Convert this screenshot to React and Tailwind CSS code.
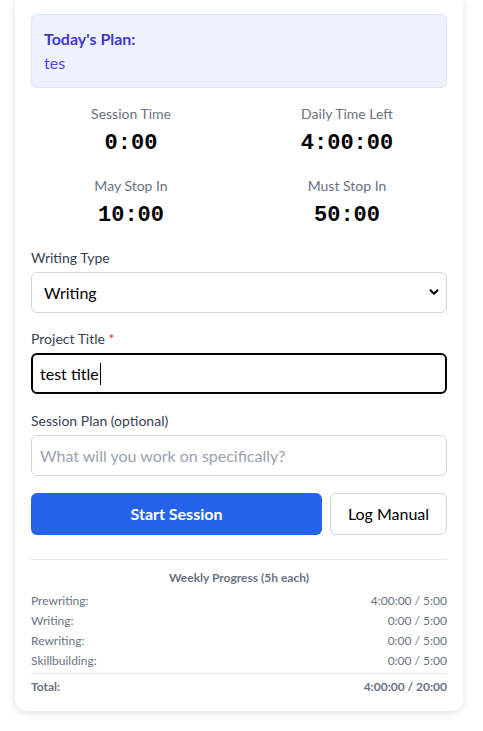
import React from 'react';
import { ChevronDown } from 'lucide-react';

const weekly = [
  ['Prewriting:', '4:00:00 / 5:00'],
  ['Writing:', '0:00 / 5:00'],
  ['Rewriting:', '0:00 / 5:00'],
  ['Skillbuilding:', '0:00 / 5:00'],
];

const Timer = ({ label, value }) => (
  <div className="flex flex-col items-center">
    <span className="text-sm leading-5 text-gray-500">{label}</span>
    <span className="mt-1 text-[22px] leading-8 font-bold text-black" style={{ fontFamily: '"Liberation Mono", "DejaVu Sans Mono", monospace' }}>{value}</span>
  </div>
);

const App = () => {
  return (
    <div className="min-h-[731px] bg-white" style={{ fontFamily: 'Lato, "Noto Sans", sans-serif' }}>
      <div className="ml-[15px] mt-[-2px] w-[448px] rounded-b-xl bg-white p-4 shadow-[0_2px_8px_rgba(0,0,0,0.12)]">
        {/* Plan */}
        <div className="rounded-md border border-[#dde3fb] bg-[#eef2ff] p-3">
          <p className="text-base leading-6 font-bold text-[#4338ca]">Today's Plan:</p>
          <p className="text-base leading-6 text-[#4f46e5]">tes</p>
        </div>

        {/* Timers */}
        <div className="mt-4 grid grid-cols-2 gap-x-4 gap-y-4">
          <Timer label="Session Time" value="0:00" />
          <Timer label="Daily Time Left" value="4:00:00" />
          <Timer label="May Stop In" value="10:00" />
          <Timer label="Must Stop In" value="50:00" />
        </div>

        {/* Form */}
        <div className="mt-4">
          <label className="mb-1 block text-sm leading-5 text-gray-700">Writing Type</label>
          <div className="relative">
            <select defaultValue="Writing" className="h-[41px] w-full appearance-none rounded-md border border-gray-300 bg-white px-3 text-base text-black outline-none">
              <option>Prewriting</option>
              <option>Writing</option>
              <option>Rewriting</option>
              <option>Skillbuilding</option>
            </select>
            <ChevronDown className="pointer-events-none absolute right-[6px] top-[13px] h-[14px] w-[14px] text-black" strokeWidth={3.5} />
          </div>
        </div>

        <div className="mt-4">
          <label className="mb-1 block text-sm leading-5 text-gray-700">
            Project Title <span className="text-red-500">*</span>
          </label>
          <div className="flex h-[41px] w-full items-center rounded-md border-2 border-black bg-white px-[7px] text-base text-black">
            <span>test title</span>
            <span className="ml-px h-[22px] w-px bg-black" />
          </div>
        </div>

        <div className="mt-[17px]">
          <label className="mb-1 block text-sm leading-5 text-gray-700">Session Plan (optional)</label>
          <input
            placeholder="What will you work on specifically?"
            className="h-[41px] w-full rounded-md border border-gray-300 bg-white px-2 text-base text-black outline-none placeholder:text-gray-400"
          />
        </div>

        {/* Buttons */}
        <div className="mt-[17px] flex gap-2">
          <button className="h-[42px] flex-1 rounded-md bg-[#2563eb] text-base font-bold text-white">Start Session</button>
          <button className="h-[42px] w-[117px] rounded-md border border-gray-300 bg-white text-base text-black">Log Manual</button>
        </div>

        {/* Weekly */}
        <div className="mt-6 border-t border-gray-200 pt-[10px]">
          <p className="text-center text-xs leading-4 font-bold text-gray-500">Weekly Progress (5h each)</p>
          <div className="mt-[7px] flex flex-col gap-1">
            {weekly.map(([k, v]) => (
              <div key={k} className="flex justify-between text-xs leading-4 text-gray-500">
                <span>{k}</span>
                <span>{v}</span>
              </div>
            ))}
          </div>
          <div className="mt-1 flex justify-between border-t border-gray-200 pt-[5px] text-xs leading-4 font-bold text-gray-500">
            <span>Total:</span>
            <span>4:00:00 / 20:00</span>
          </div>
        </div>
      </div>
    </div>
  );
};

export default App;
